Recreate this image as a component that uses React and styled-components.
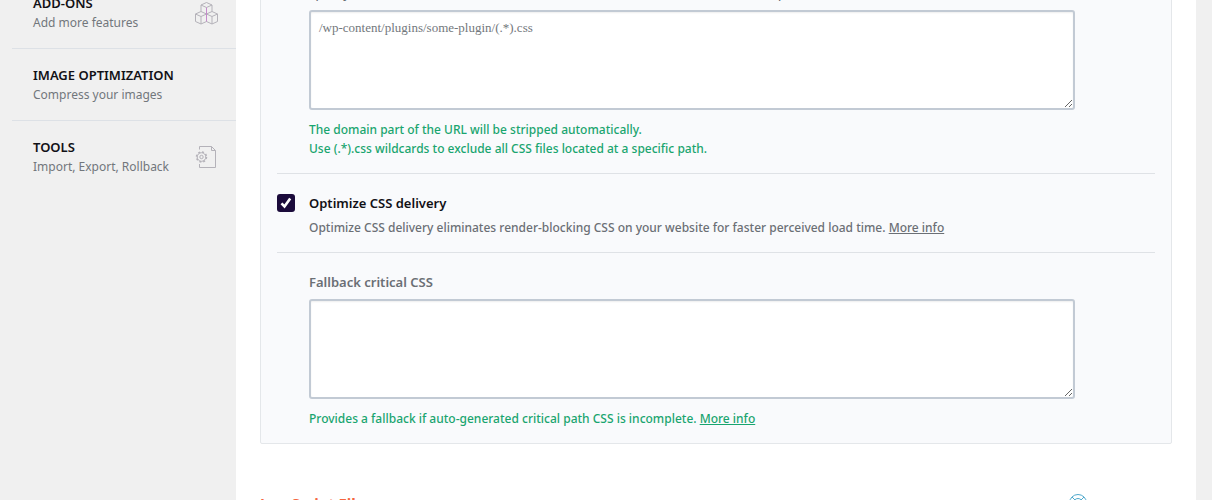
import React from "react";
import styled, { createGlobalStyle } from "styled-components";

const GlobalStyle = createGlobalStyle`
  * { box-sizing: border-box; }
  body {
    margin: 0;
    background: #f0f0f0;
    color: #6b6f75;
    font: 500 12px/19px "Noto Sans", sans-serif;
  }
`;

const Viewport = styled.div`
  height: 100vh;
  overflow: hidden;
`;

const Page = styled.div`
  display: flex;
  margin-top: -37px;
  padding-right: 16px;
`;

const Sidebar = styled.nav`
  flex: 0 0 224px;
  margin-left: 12px;
  padding-top: 14px;
  font-weight: 400;
`;

const MenuItem = styled.a`
  display: flex;
  align-items: center;
  justify-content: space-between;
  height: 72px;
  padding: 0 18px 0 21px;
  border-bottom: 1px solid ${(p) => (p.$last ? "transparent" : "#dde1e6")};
  color: #72777c;
  text-decoration: none;
`;

const MenuTitle = styled.strong`
  display: block;
  color: #121116;
  font-size: 13px;
  font-weight: 600;
  text-transform: uppercase;
`;

const MenuIcon = styled.svg`
  flex: none;
  width: 24px;
  height: 24px;
  fill: none;
  stroke: #b4b2b9;
  stroke-linejoin: round;
`;

const Main = styled.main`
  flex: 1;
  min-width: 0;
  min-height: 600px;
  padding: 0 24px;
  background: #fff;
`;

const Card = styled.section`
  padding: 0 16px;
  border: 1px solid #e4e7ea;
  border-radius: 2px;
  background: #f9fafc;
`;

const Field = styled.div`
  padding: 20px 80px 15px 32px;
  & + div { border-top: 1px solid #dfe2e6; }
`;

const FieldLabel = styled.label`
  display: block;
  margin-bottom: 7px;
  font-size: ${(p) => (p.$plain ? 12 : 13)}px;
  font-weight: ${(p) => (p.$plain ? 500 : 600)};
`;

const TextArea = styled.textarea`
  display: block;
  width: 100%;
  height: 100px;
  margin-bottom: 10px;
  padding: 8px;
  border: 2px solid #c2cad4;
  border-radius: 3px;
  box-shadow: inset 0 1px 2px rgba(0, 0, 0, 0.07);
  background: #fff;
  font: 13px/16px "Liberation Serif", serif;
  resize: both;
  &::placeholder { color: #72777c; }
`;

const Hint = styled.p`
  margin: 0;
  color: #19a56f;
`;

const Link = styled.a`
  color: inherit;
  text-decoration: underline;
`;

const Option = styled.div`
  display: flex;
  gap: 14px;
  padding: 20px 0 15px;
  border-bottom: 1px solid #dfe2e6;
`;

const Tick = styled.span`
  display: grid;
  flex: none;
  width: 18px;
  height: 18px;
  & > * { grid-area: 1 / 1; }
  svg { pointer-events: none; }
  input:not(:checked) + svg { visibility: hidden; }
`;

const Checkbox = styled.input`
  appearance: none;
  width: 18px;
  height: 18px;
  margin: 0;
  border-radius: 3px;
  background: #1b0b3b;
`;

const OptionLabel = styled.label`
  display: block;
  color: #121116;
  font-size: 13px;
  font-weight: 600;
`;

const Description = styled.p`
  margin: 5px 0 0;
`;

const SectionHead = styled.header`
  display: flex;
  align-items: flex-start;
  justify-content: space-between;
  padding: 50px 85px 0 0;
`;

const SectionTitle = styled.h2`
  margin: 0;
  color: #f56640;
  font-size: 15px;
  font-weight: 700;
  line-height: 18px;
`;

const HelpLink = styled.a`
  display: block;
  height: 18px;
  color: #4fa9cc;
`;

const CubesIcon = () => (
  <MenuIcon viewBox="0 0 24 24" aria-hidden="true">
    <path d="M7 10.5V4L12.500 1.500L18 4V10.500M7 4L12.500 6.500L18 4" />
    <path d="M12.500 13V20.500L7 23L1.500 20.500V13L7 10.500L12.500 13L7 15.500L1.500 13M7 15.500V23" />
    <path d="M12.500 13L18 10.500L23.500 13V20.500L18 23L12.500 20.500M12.500 13L18 15.500L23.500 13M18 15.500V23" />
    <path d="M12.500 6.500V20.500" stroke="#c58bcb" />
  </MenuIcon>
);

const FileGearIcon = () => (
  <MenuIcon viewBox="0 0 24 24" aria-hidden="true">
    <path d="M5.500 4.500V1.500H17.500L21.500 5.500V22.500H5.500V19M17.500 1.500V5.500H21.500" />
    <circle cx="7.500" cy="12" r="4.300" />
    <circle cx="7.500" cy="12" r="5" strokeWidth="1.500" strokeDasharray="1.960 1.960" />
    <circle cx="7.500" cy="12" r="1.700" />
  </MenuIcon>
);

export default function App() {
  return (
    <Viewport>
      <GlobalStyle />
      <Page>
        <Sidebar>
          <MenuItem href="#addons">
            <span><MenuTitle>Add-ons</MenuTitle>Add more features</span>
            <CubesIcon />
          </MenuItem>
          <MenuItem href="#image">
            <span><MenuTitle>Image optimization</MenuTitle>Compress your images</span>
          </MenuItem>
          <MenuItem href="#tools" $last>
            <span><MenuTitle>Tools</MenuTitle>Import, Export, Rollback</span>
            <FileGearIcon />
          </MenuItem>
        </Sidebar>
        <Main>
          <Card>
            <Field>
              <FieldLabel htmlFor="exclude" $plain>
                Specify URLs of CSS files to be excluded from minification and concatenation (one per line).
              </FieldLabel>
              <TextArea id="exclude" placeholder="/wp-content/plugins/some-plugin/(.*).css" />
              <Hint>
                The domain part of the URL will be stripped automatically.<br />
                Use (.*).css wildcards to exclude all CSS files located at a specific path.
              </Hint>
            </Field>
            <Option>
              <Tick>
                <Checkbox type="checkbox" id="optimize" defaultChecked />
                <svg viewBox="0 0 18 18" fill="none" stroke="#fff" strokeWidth="2.600" aria-hidden="true">
                  <path d="M4.500 9.300L7.500 12.500L13.200 4.500" />
                </svg>
              </Tick>
              <div>
                <OptionLabel htmlFor="optimize">Optimize CSS delivery</OptionLabel>
                <Description>
                  Optimize CSS delivery eliminates render-blocking CSS on your website for faster perceived load time.{" "}
                  <Link href="#delivery">More info</Link>
                </Description>
              </div>
            </Option>
            <Field>
              <FieldLabel htmlFor="fallback">Fallback critical CSS</FieldLabel>
              <TextArea id="fallback" />
              <Hint>
                Provides a fallback if auto-generated critical path CSS is incomplete.{" "}
                <Link href="#fallback-info">More info</Link>
              </Hint>
            </Field>
          </Card>
          <SectionHead>
            <SectionTitle>JavaScript Files</SectionTitle>
            <HelpLink href="#help" aria-label="Help">
              <svg width="18" height="18" viewBox="0 0 18 18" fill="none" stroke="currentColor" aria-hidden="true">
                <circle cx="9" cy="9" r="8.500" />
                <circle cx="9" cy="9" r="4.500" />
                <path d="M3 3L6 6M15 3L12 6M3 15L6 12M15 15L12 12" />
              </svg>
            </HelpLink>
          </SectionHead>
        </Main>
      </Page>
    </Viewport>
  );
}
